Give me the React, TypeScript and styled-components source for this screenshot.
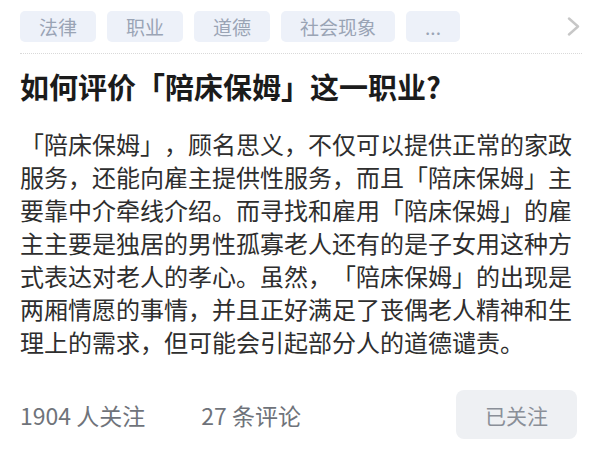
import React from "react";
import styled, { createGlobalStyle } from "styled-components";

const GlobalStyle = createGlobalStyle`
  html, body {
    margin: 0;
    padding: 0;
    background: #ffffff;
  }
  body {
    font-family: "Noto Sans CJK SC", "Noto Sans", sans-serif;
    -webkit-font-smoothing: antialiased;
  }
`;

const tags = ["法律", "职业", "道德", "社会现象", "..."];

const Page = styled.div`
  width: 600px;
  height: 463px;
  overflow: hidden;
  background: #fff;
`;

const TagBar = styled.div`
  display: flex;
  align-items: center;
  margin: 0 18px 0 20px;
  padding: 11px 0 11px;
  border-bottom: 1px dotted #d9d9d9;
`;

const TagList = styled.div`
  display: flex;
  gap: 11px;
  flex: 1;
`;

const Tag = styled.span`
  display: inline-flex;
  align-items: center;
  justify-content: center;
  height: 31px;
  padding: 0 19px;
  border-radius: 5px;
  background: #edf1f9;
  color: #9aa4b5;
  font-size: 19px;
  line-height: 1;
`;

const MoreArrow = styled.svg`
  width: 16px;
  height: 19px;
  flex-shrink: 0;
`;

const Title = styled.h1`
  margin: 0;
  padding: 12px 20px 0;
  font-size: 29px;
  line-height: 40px;
  font-weight: 700;
  color: #1b1b1b;
  text-spacing-trim: space-all;
`;

const Body = styled.p`
  margin: 21px 0 0;
  padding: 0 20px;
  font-size: 24px;
  line-height: 33px;
  color: #2e2e2e;
  text-spacing-trim: space-all;
`;

const Footer = styled.div`
  display: flex;
  align-items: center;
  margin-top: 32px;
  padding: 0 23px 0 20px;
`;

const Stat = styled.span<{ $gap?: number }>`
  font-size: 23px;
  font-weight: 400;
  color: #6f737a;
  margin-right: ${(p) => p.$gap ?? 0}px;
`;

const Spacer = styled.div`
  flex: 1;
`;

const FollowButton = styled.button`
  width: 121px;
  height: 49px;
  border: none;
  border-radius: 8px;
  background: #eef0f3;
  color: #8a8f98;
  font-family: inherit;
  font-size: 21px;
  padding: 0;
`;

export default function App() {
  return (
    <Page>
      <GlobalStyle />
      <TagBar>
        <TagList>
          {tags.map((t) => (
            <Tag key={t}>{t}</Tag>
          ))}
        </TagList>
        <MoreArrow viewBox="0 0 16 19">
          <polyline
            points="3,1.5 12,9.5 3,17.5"
            fill="none"
            stroke="#c7c7c7"
            strokeWidth="2.4"
            strokeLinecap="round"
            strokeLinejoin="round"
          />
        </MoreArrow>
      </TagBar>
      <Title>如何评价「陪床保姆」这一职业?</Title>
      <Body>
        「陪床保姆」，顾名思义，不仅可以提供正常的家政服务，还能向雇主提供性服务，而且「陪床保姆」主要靠中介牵线介绍。而寻找和雇用「陪床保姆」的雇主主要是独居的男性孤寡老人还有的是子女用这种方式表达对老人的孝心。虽然，「陪床保姆」的出现是两厢情愿的事情，并且正好满足了丧偶老人精神和生理上的需求，但可能会引起部分人的道德谴责。
      </Body>
      <Footer>
        <Stat $gap={56}>1904 人关注</Stat>
        <Stat>27 条评论</Stat>
        <Spacer />
        <FollowButton>已关注</FollowButton>
      </Footer>
    </Page>
  );
}
